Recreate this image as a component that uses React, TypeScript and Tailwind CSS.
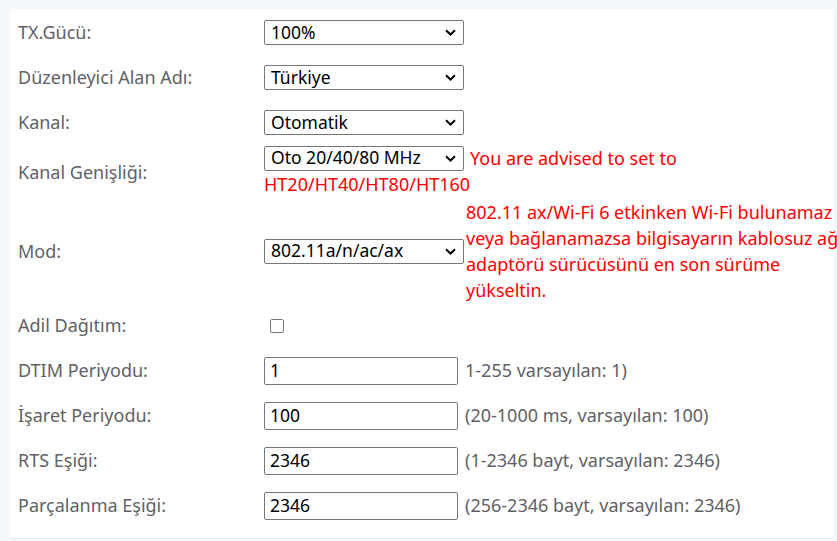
import React from "react";

const FONT = { fontFamily: '"Noto Sans", "Liberation Sans", sans-serif' };

function Chevron() {
  return (
    <svg width="11" height="7" viewBox="0 0 11 7" className="shrink-0">
      <path d="M1 1.2 L5.5 5.5 L10 1.2" fill="none" stroke="#000" strokeWidth="2" />
    </svg>
  );
}

function FakeSelect({ value }: { value: string }) {
  return (
    <div className="flex h-[25px] w-[200px] shrink-0 items-center justify-between rounded-[2px] border border-[#767676] bg-white pl-[6px] pr-[7px] text-[17.5px] leading-none text-black">
      <span>{value}</span>
      <Chevron />
    </div>
  );
}

function TextInput({ value }: { value: string }) {
  return (
    <div className="flex h-[28px] w-[194px] shrink-0 items-center rounded-[2px] border border-[#767676] bg-white pl-[5px] text-[17.5px] leading-none text-black">
      {value}
    </div>
  );
}

function Row({ label, h, children }: { label: string; h: string; children: React.ReactNode }) {
  return (
    <div className={`flex items-center ${h}`}>
      <div className="w-[254px] shrink-0 pl-[8px] text-[18px] text-[#5f6166]">{label}</div>
      <div className="flex min-w-0 flex-1 items-center">{children}</div>
    </div>
  );
}

const inputs = [
  { label: "DTIM Periyodu:", value: "1", hint: "1-255 varsayılan: 1)" },
  { label: "İşaret Periyodu:", value: "100", hint: "(20-1000 ms, varsayılan: 100)" },
  { label: "RTS Eşiği:", value: "2346", hint: "(1-2346 bayt, varsayılan: 2346)" },
  { label: "Parçalanma Eşiği:", value: "2346", hint: "(256-2346 bayt, varsayılan: 2346)" },
];

export default function App() {
  return (
    <div className="h-[541px] w-[837px] overflow-hidden bg-[#f4f7fb] pt-[9px]" style={FONT}>
      <div className="ml-[10px] w-[823px] border-b border-[#e4e7ec] bg-white pt-[1px] pb-[10px]">
        <Row label="TX.Gücü:" h="h-[45px]">
          <FakeSelect value="100%" />
        </Row>
        <Row label="Düzenleyici Alan Adı:" h="h-[45px]">
          <FakeSelect value="Türkiye" />
        </Row>
        <Row label="Kanal:" h="h-[45px]">
          <FakeSelect value="Otomatik" />
        </Row>
        <div className="flex h-[54px] items-center">
          <div className="w-[254px] shrink-0 pl-[8px] text-[18px] text-[#5f6166]">Kanal Genişliği:</div>
          <div className="flex-1 self-start text-[18px] leading-[26px] text-[#ff0000]">
            <div className="flex items-center">
              <FakeSelect value="Oto 20/40/80 MHz" />
              <span className="ml-[6px]">You are advised to set to</span>
            </div>
            <div>HT20/HT40/HT80/HT160</div>
          </div>
        </div>
        <Row label="Mod:" h="h-[104px]">
          <FakeSelect value="802.11a/n/ac/ax" />
          <div className="ml-[2px] w-[376px] shrink-0 text-[18px] leading-[26px] text-[#ff0000]">
            802.11 ax/Wi-Fi 6 etkinken Wi-Fi bulunamaz veya bağlanamazsa bilgisayarın kablosuz ağ adaptörü sürücüsünü en son sürüme yükseltin.
          </div>
        </Row>
        <Row label="Adil Dağıtım:" h="h-[45px]">
          <div className="ml-[6px] h-[14px] w-[14px] rounded-[2px] border border-[#767676] bg-white" />
        </Row>
        {inputs.map((r) => (
          <Row key={r.label} label={r.label} h="h-[45px]">
            <TextInput value={r.value} />
            <span className="ml-[7px] text-[18px] text-[#5f6166]">{r.hint}</span>
          </Row>
        ))}
      </div>
    </div>
  );
}
